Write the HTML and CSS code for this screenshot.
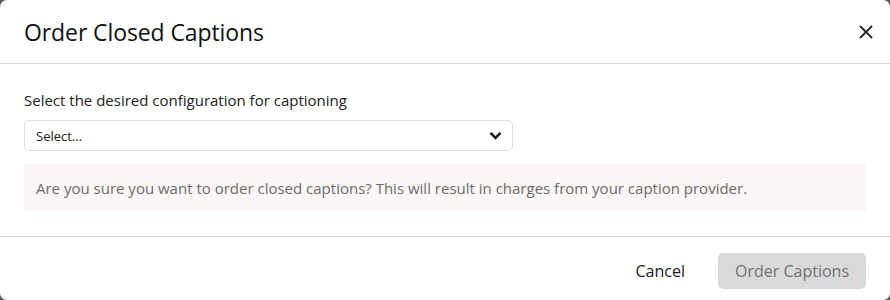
FILE: index.html
```html
<!DOCTYPE html>
<html lang="en">
<head>
    <meta charset="UTF-8">
    <meta name="viewport" content="width=device-width, initial-scale=1.0">
    <title>Order Closed Captions</title>
    <link rel="stylesheet" href="styles.css">
</head>
<body>
    <div class="modal">
        <div class="modal-header">
            <h2 class="modal-title">Order Closed Captions</h2>
            <button class="close-button" aria-label="Close">
                <svg width="14" height="14" viewBox="0 0 14 14">
                    <path d="M1 1L13 13M13 1L1 13" stroke="#2b2b2b" stroke-width="2" fill="none"/>
                </svg>
            </button>
        </div>
        <div class="modal-body">
            <label class="label" for="config">Select the desired configuration for captioning</label>
            <div class="select" id="config">
                <span>Select...</span>
                <svg width="13" height="9" viewBox="0 0 13 9">
                    <path d="M1.5 1.8L6.5 6.8L11.5 1.8" stroke="#1f1f1f" stroke-width="2.6" fill="none"/>
                </svg>
            </div>
            <div class="notice">Are you sure you want to order closed captions? This will result in charges from your caption provider.</div>
        </div>
        <div class="modal-footer">
            <button class="cancel-button">Cancel</button>
            <button class="order-button" disabled>Order Captions</button>
        </div>
    </div>
</body>
</html>
```

FILE: styles.css
```css
body {
    margin: 0;
    background: #5a5a5a;
    font-family: 'Open Sans', 'Lato', sans-serif;
}

.modal {
    width: 890px;
    height: 300px;
    background-color: #fff;
    border-radius: 7px;
    overflow: hidden;
    display: flex;
    flex-direction: column;
}

.modal-header {
    height: 63px;
    border-bottom: 1px solid #d9d9d9;
    display: flex;
    align-items: center;
    justify-content: space-between;
    padding: 0 17px 0 24px;
}

.modal-title {
    margin: 0;
    font-size: 23px;
    line-height: 30px;
    font-weight: 400;
    color: #111;
    letter-spacing: -0.1px;
}

.close-button {
    background: none;
    border: none;
    padding: 0;
    display: flex;
    cursor: pointer;
}

.modal-body {
    padding: 26px 24px 25px;
    border-bottom: 1px solid #d9d9d9;
}

.label {
    display: block;
    font-size: 15px;
    line-height: 20px;
    color: #222;
    margin-bottom: 10px;
}

.select {
    width: 489px;
    height: 31px;
    box-sizing: border-box;
    border: 1px solid #dcdcdc;
    border-radius: 5px;
    display: flex;
    align-items: center;
    justify-content: space-between;
    padding: 0 10px 0 11px;
    font-size: 13px;
    color: #1a1a1a;
}

.notice {
    margin-top: 13px;
    background-color: #fdf6f6;
    padding: 14px 12px 13px;
    font-size: 15px;
    line-height: 20px;
    color: #6b6b6b;
}

.modal-footer {
    flex: 1;
    display: flex;
    align-items: center;
    justify-content: flex-end;
    padding: 4px 24px 0;
    gap: 33px;
}

.cancel-button {
    background: none;
    border: none;
    font-family: inherit;
    font-size: 16px;
    color: #1a1a1a;
    padding: 0;
    cursor: pointer;
}

.order-button {
    background-color: #d9d9d9;
    color: #737373;
    border: none;
    border-radius: 5px;
    font-family: inherit;
    font-size: 16px;
    width: 148px;
    height: 36px;
}
```
